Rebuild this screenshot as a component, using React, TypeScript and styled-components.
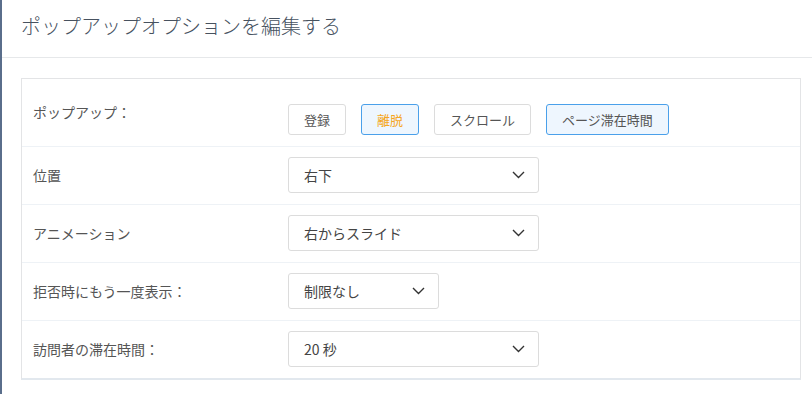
import React from "react";
import styled, { createGlobalStyle } from "styled-components";

const Global = createGlobalStyle`
  html, body { margin: 0; padding: 0; background: #fff; }
  body { font-family: "Noto Sans CJK JP", "Noto Sans", sans-serif; }
  * { box-sizing: border-box; }
`;

const Page = styled.div`
  min-height: 100vh;
  border-left: 2px solid #5a6e8b;
`;

const Header = styled.header`
  height: 58px;
  border-bottom: 1px solid #e6e8ea;
  padding-left: 19px;
  display: flex;
  align-items: center;
`;

const Title = styled.h1`
  margin: 0;
  font-size: 20px;
  font-weight: 300;
  color: #47525f;
  line-height: 1;
  padding-bottom: 6px;
`;

const Card = styled.section`
  margin: 20px 11px 0 19px;
  border: 1px solid #e3e4e6;
  border-bottom: 2px solid #e2e8ee;
`;

const Row = styled.div<{ $first?: boolean }>`
  display: flex;
  align-items: ${(p) => (p.$first ? "flex-start" : "center")};
  padding: ${(p) => (p.$first ? "23px 11px 11px" : "10px 11px 11px")};
  border-bottom: 1px solid #eef2f6;
  &:last-child { border-bottom: none; }
`;

const Label = styled.div`
  width: 255px;
  flex: none;
  font-size: 14px;
  line-height: 20px;
  color: #555;
`;

const ButtonGroup = styled.div`
  display: flex;
  gap: 15px;
  padding-top: 2px;
`;

const Choice = styled.button<{ $active?: boolean; $warn?: boolean }>`
  height: 31px;
  padding: 0 15px;
  font-family: inherit;
  font-size: 13px;
  border-radius: 3px;
  cursor: pointer;
  border: 1px solid ${(p) => (p.$active ? "#4aa0ea" : "#dcdcdc")};
  background: ${(p) => (p.$active ? "#eef6fe" : "#fff")};
  color: ${(p) => (p.$warn ? "#f5a623" : "#555")};
`;

const Select = styled.div<{ $w: number }>`
  width: ${(p) => p.$w}px;
  height: 36px;
  border: 1px solid #dcdcdc;
  border-radius: 3px;
  display: flex;
  align-items: center;
  justify-content: space-between;
  padding: 0 13px 0 15px;
  font-size: 14px;
  color: #444;
`;

const Chevron = () => (
  <svg width="13" height="8" viewBox="0 0 13 8">
    <polyline points="1,1 6.5,6.5 12,1" fill="none" stroke="#333" strokeWidth="1.4" />
  </svg>
);

const Dropdown = ({ value, width }: { value: string; width: number }) => (
  <Select $w={width}>
    <span>{value}</span>
    <Chevron />
  </Select>
);

export default function App() {
  return (
    <Page>
      <Global />
      <Header>
        <Title>ポップアップオプションを編集する</Title>
      </Header>
      <Card>
        <Row $first>
          <Label>ポップアップ：</Label>
          <ButtonGroup>
            <Choice>登録</Choice>
            <Choice $active $warn>離脱</Choice>
            <Choice>スクロール</Choice>
            <Choice $active>ページ滞在時間</Choice>
          </ButtonGroup>
        </Row>
        <Row>
          <Label>位置</Label>
          <Dropdown value="右下" width={251} />
        </Row>
        <Row>
          <Label>アニメーション</Label>
          <Dropdown value="右からスライド" width={251} />
        </Row>
        <Row>
          <Label>拒否時にもう一度表示：</Label>
          <Dropdown value="制限なし" width={151} />
        </Row>
        <Row>
          <Label>訪問者の滞在時間：</Label>
          <Dropdown value="20 秒" width={251} />
        </Row>
      </Card>
    </Page>
  );
}
